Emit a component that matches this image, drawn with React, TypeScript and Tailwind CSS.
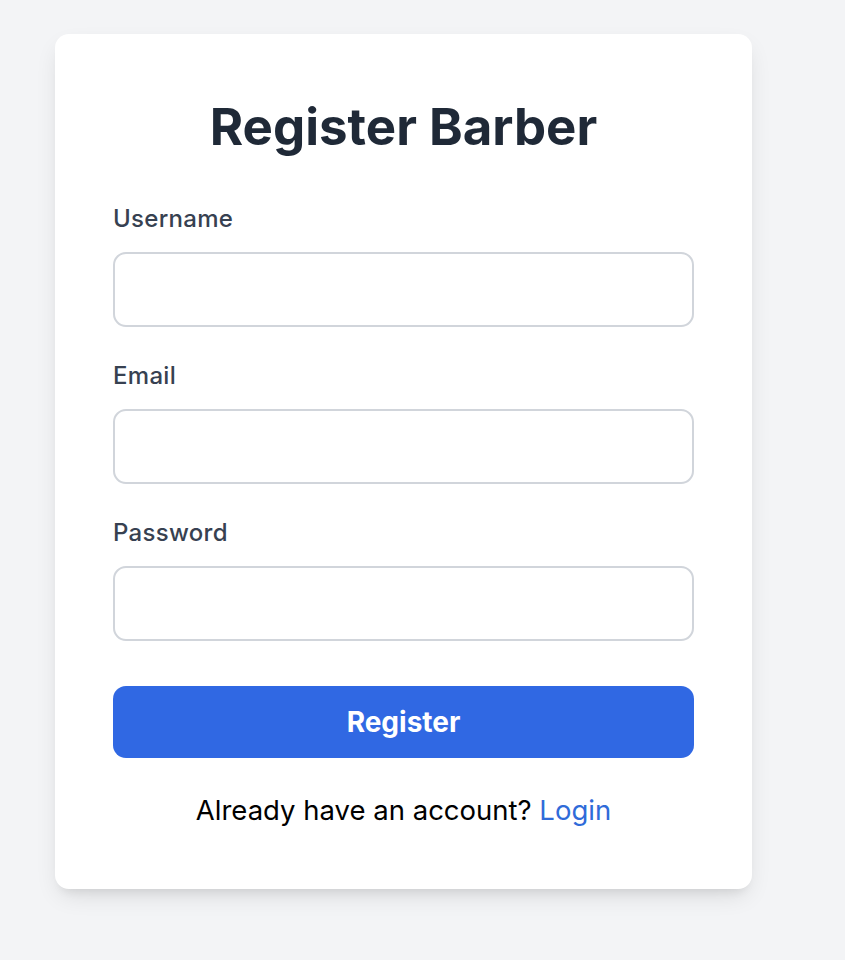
import React from "react";

export default function App() {
  const font = { fontFamily: "Inter, 'Noto Sans', sans-serif" };
  return (
    <div className="min-h-[960px] w-full bg-[#f3f4f6]" style={font}>
      <div className="pt-[34px] pl-[55px]">
        <div className="w-[697px] rounded-[14px] bg-white px-[58px] pt-[63px] pb-[61px] shadow-[0_10px_25px_-5px_rgba(0,0,0,0.12),0_8px_10px_-6px_rgba(0,0,0,0.08)]">
          <h1 className="text-center text-[51px] leading-[60px] font-bold text-[#1f2937]">
            Register Barber
          </h1>
          <form className="mt-[46px] flex flex-col" onSubmit={(e) => e.preventDefault()}>
            {[
              { label: "Username", type: "text" },
              { label: "Email", type: "email" },
              { label: "Password", type: "password" },
            ].map((f, i) => (
              <div key={f.label} className={i === 0 ? "" : "mt-[33px]"}>
                <label className="block text-[24px] leading-[32px] tracking-[0.3px] font-medium text-[#374151]">
                  {f.label}
                </label>
                <input
                  type={f.type}
                  className="mt-[17px] block h-[75px] w-full rounded-[13px] border-2 border-[#d1d5db] bg-white px-4 text-[22px] outline-none"
                />
              </div>
            ))}
            <button
              type="submit"
              className="mt-[45px] h-[72px] w-full rounded-[13px] bg-[#3068e3] text-[28px] font-bold text-white"
            >
              Register
            </button>
          </form>
          <p className="mt-[34px] text-center text-[27.5px] leading-[36px] text-black">
            Already have an account? <a className="text-[#2f6bd9]" href="#">Login</a>
          </p>
        </div>
      </div>
    </div>
  );
}
